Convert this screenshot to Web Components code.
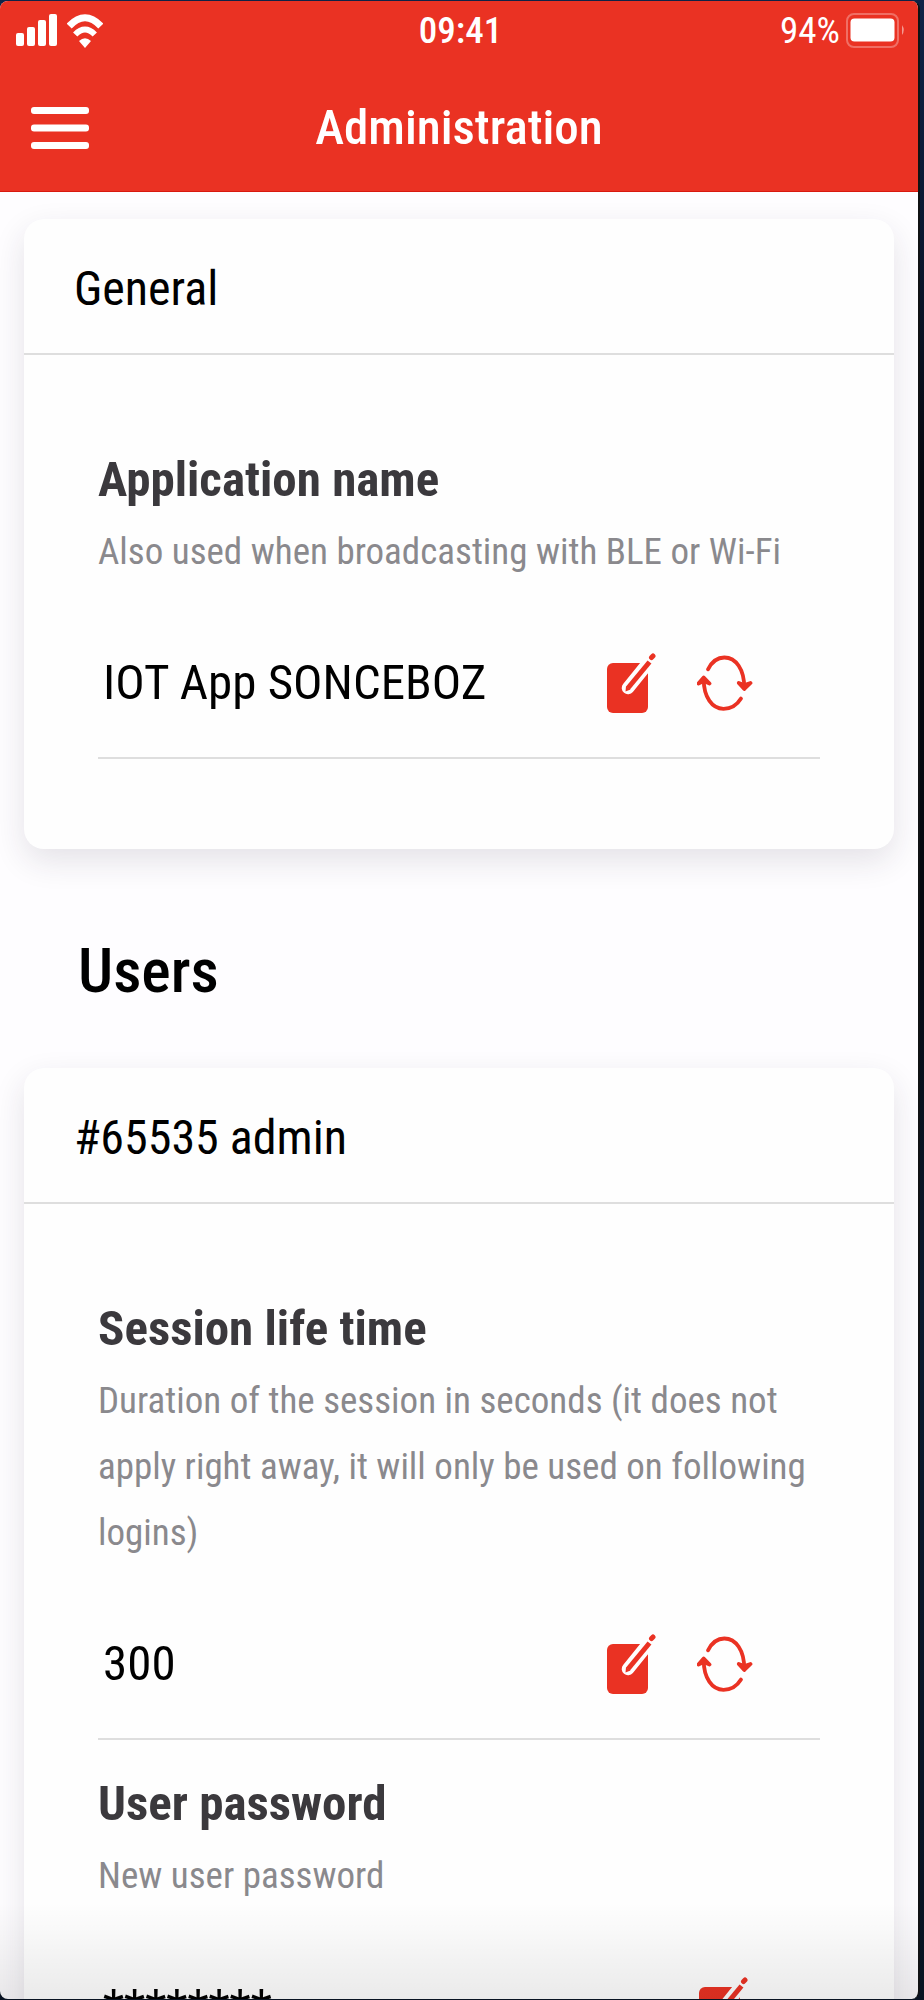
<!DOCTYPE html>
<html lang="en">
<head>
<meta charset="utf-8">
<meta name="viewport" content="width=device-width, initial-scale=1">
<title>Administration</title>
<style>
  html, body { margin: 0; height: 100%; }
  body {
    background: linear-gradient(#0f2347 0, #0a1730 12%, #06080f 24%, #05070f 45%, #0b1a2e 65%, #081322 100%);
    font-family: "Roboto Condensed", Roboto, "Liberation Sans", sans-serif;
    font-size: 48px;
    color: #000;
    --accent: #ea3223;
    --line: #dedede;
  }
</style>
</head>
<body>

<admin-app>
  <status-bar slot="status" time="09:41" battery="94"></status-bar>
  <nav-bar slot="nav">Administration</nav-bar>
  <settings-card heading="General">
    <setting-field label="Application name" hint="Also used when broadcasting with BLE or Wi-Fi" value="IOT App SONCEBOZ" reload></setting-field>
  </settings-card>
  <section-title>Users</section-title>
  <settings-card heading="#65535 admin">
    <setting-field label="Session life time" hint="Duration of the session in seconds (it does not apply right away, it will only be used on following logins)" value="300" reload></setting-field>
    <setting-field label="User password" hint="New user password" value="********"></setting-field>
  </settings-card>
</admin-app>

<script>
class BaseElement extends HTMLElement {
  connectedCallback() {
    if (this.shadowRoot) return;
    this.attachShadow({ mode: 'open' }).innerHTML = this.render();
  }
  text(name) {
    return (this.getAttribute(name) || '').replace(/&/g, '&amp;').replace(/</g, '&lt;').replace(/"/g, '&quot;');
  }
}

customElements.define('admin-app', class extends BaseElement {
  render() {
    return `
      <style>
        :host { display: block; box-sizing: border-box; height: 100vh; padding: 1px 4px 1px 0; }
        .screen { position: relative; display: flex; flex-direction: column; height: 100%; box-sizing: border-box;
                  overflow: hidden; border-right: 2px solid #101214; border-radius: 8px; background: #fefdff; }
        header { flex: none; background: var(--accent); border-bottom: 1px solid #d8190f; }
        main { flex: 1; min-height: 0; overflow-y: auto; scrollbar-width: none; padding: 27px 24px; }
        .fade { position: absolute; inset: auto 0 0 0; height: 96px; pointer-events: none;
                background: linear-gradient(rgba(0,0,0,0), rgba(0,0,0,.08)); }
      </style>
      <div class="screen">
        <header><slot name="status"></slot><slot name="nav"></slot></header>
        <main><slot></slot></main>
        <div class="fade"></div>
      </div>`;
  }
});

customElements.define('status-bar', class extends BaseElement {
  render() {
    return `
      <style>
        :host { display: grid; grid-template-columns: 1fr auto 1fr; align-items: center; height: 60px;
                padding: 0 13px 0 16px; color: #fff; font-size: 37px; line-height: 60px; }
        .left { display: flex; align-items: center; gap: 10px; }
        .right { display: flex; align-items: center; justify-content: flex-end; gap: 6px; }
        .time { font-weight: 500; }
        svg { display: block; }
      </style>
      <div class="left">
        <svg width="41" height="34" viewBox="0 0 41 34" fill="#fff" aria-hidden="true">
          <rect x="0" y="19" width="8" height="13" rx="2"/><rect x="11" y="13" width="8" height="19" rx="2"/>
          <rect x="22" y="6" width="8" height="26" rx="2"/><rect x="33" y="0" width="8" height="32" rx="2"/>
        </svg>
        <svg width="36" height="34" viewBox="0 0 36 34" aria-hidden="true">
          <path d="M2.200 12 Q18 -4.500 33.800 12" fill="none" stroke="#fff" stroke-width="7"/>
          <path d="M8.200 20.500 Q18 10.500 27.800 20.500" fill="none" stroke="#fff" stroke-width="6"/>
          <path d="M12 27 Q18 21.500 24 27 L18 34 Z" fill="#fff"/>
        </svg>
      </div>
      <span class="time">${this.text('time')}</span>
      <div class="right">
        <span>${this.text('battery')}%</span>
        <svg width="59" height="36" viewBox="0 0 59 36" aria-hidden="true">
          <rect x="1" y="1" width="51" height="33" rx="7" fill="none" stroke="#fff" stroke-opacity=".3" stroke-width="2"/>
          <rect x="4.500" y="5.500" width="44" height="23" rx="4" fill="#fff"/>
          <path d="M56 12 q3.500 5 0 10 Z" fill="#fff" fill-opacity=".5"/>
        </svg>
      </div>`;
  }
});

customElements.define('nav-bar', class extends BaseElement {
  render() {
    return `
      <style>
        :host { display: grid; grid-template-columns: 1fr auto 1fr; align-items: center; box-sizing: border-box; height: 130px; padding: 3px 31px 0; color: #fff; }
        button { justify-self: start; padding: 0; border: 0; background: none; color: inherit; cursor: pointer; }
        svg { display: block; }
        h1 { margin: 0; font-size: 49px; line-height: 66px; font-weight: 500; }
      </style>
      <button type="button" aria-label="Menu">
        <svg width="58" height="42" viewBox="0 0 58 42" fill="currentColor">
          <rect width="58" height="7" rx="3"/><rect y="17.500" width="58" height="7" rx="3"/><rect y="35" width="58" height="7" rx="3"/>
        </svg>
      </button>
      <h1><slot></slot></h1>`;
  }
});

customElements.define('section-title', class extends BaseElement {
  render() {
    return `
      <style>
        :host { display: block; padding: 92px 54px 67px; }
        h2 { margin: 0; font-size: 62px; line-height: 60px; font-weight: 500; }
      </style>
      <h2><slot></slot></h2>`;
  }
});

customElements.define('settings-card', class extends BaseElement {
  render() {
    return `
      <style>
        :host { display: block; border-radius: 20px; background: #fefefe; box-shadow: 0 12px 32px rgba(40,30,60,.12); }
        h3 { box-sizing: border-box; margin: 0; padding: 38px 50px 32px; border-bottom: 2px solid var(--line);
             font-size: 48px; line-height: 64px; font-weight: 400; }
        .body { display: flex; flex-direction: column; gap: 31px; padding: 92px 74px 90px; }
      </style>
      <section>
        <h3>${this.text('heading')}</h3>
        <div class="body"><slot></slot></div>
      </section>`;
  }
});

customElements.define('setting-field', class extends BaseElement {
  render() {
    const label = this.text('label');
    const reload = this.hasAttribute('reload') ? `
      <button type="button" aria-label="Reload ${label}">
        <svg width="56" height="60" viewBox="0 0 56 60" fill="none" stroke="var(--accent)" stroke-width="3.800" stroke-linecap="round" stroke-linejoin="round">
          <path d="M11 16.300 C15 8.500 21 4.500 27.300 4.500 C39 4.500 47.300 16.500 47.300 35"/>
          <path d="M41.800 30 L47.300 36 L53.500 30 L47.300 32 Z"/>
          <path d="M6.700 26 C6.700 44 15 55.800 26.500 55.800 C33.500 55.800 40 52 44 45.500"/>
          <path d="M1.500 30.500 L6.700 24.500 L12.500 30.500 L6.700 28 Z"/>
        </svg>
      </button>` : '';
    return `
      <style>
        :host { display: block; }
        label { display: block; font-size: 49px; line-height: 66px; font-weight: 700; color: #3b393d; }
        p { margin: 6px 0 24px; font-size: 37px; line-height: 66px; color: #8a898d; }
        .row { display: flex; align-items: center; gap: 36px; height: 148px; padding: 0 67px 0 5px; border-bottom: 2px solid var(--line); }
        input { flex: 1; min-width: 0; padding: 0; border: 0; outline: 0; background: none; font: inherit; font-size: 49px; line-height: 66px; color: #000; }
        button { flex: none; padding: 0; border: 0; background: none; cursor: pointer; }
        svg { display: block; }
      </style>
      <label for="value">${label}</label>
      <p id="hint">${this.text('hint')}</p>
      <div class="row">
        <input id="value" type="text" aria-describedby="hint" value="${this.text('value')}">
        <button type="button" aria-label="Edit ${label}">
          <svg width="56" height="60" viewBox="0 0 56 60" fill="none">
            <rect x="2" y="10" width="41" height="50" rx="6" fill="var(--accent)"/>
            <path d="M23 35 L48 4" stroke="#fefefe" stroke-width="12.500" stroke-linecap="round"/>
            <path d="M23 35 L44.500 9" stroke="var(--accent)" stroke-width="5"/>
            <path d="M20.500 38.500 L21 33 L25.500 36.500 Z" fill="var(--accent)"/>
            <path d="M46.500 4.500 L48 3" stroke="var(--accent)" stroke-width="5" stroke-linecap="round"/>
          </svg>
        </button>${reload}
      </div>`;
  }
});
</script>
</body>
</html>
